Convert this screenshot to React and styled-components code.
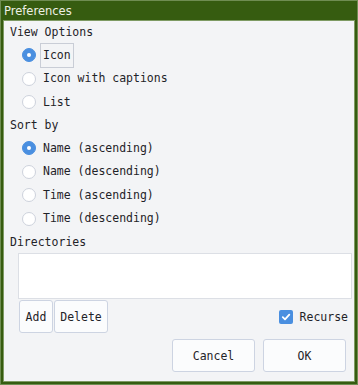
import React from 'react'
import styled, { createGlobalStyle } from 'styled-components'

const viewOptions = ['Icon', 'Icon with captions', 'List']
const sortOptions = ['Name (ascending)', 'Name (descending)', 'Time (ascending)', 'Time (descending)']

const App = () => {
  return (
    <>
      <Global />
      <Window>
        <TitleBar>Preferences</TitleBar>
        <Content>
          <SectionLabel>View Options</SectionLabel>
          {viewOptions.map((o, i) => (
            <OptionRow key={o}>
              <Radio checked={i === 0} />
              <OptionText focused={i === 0}>{o}</OptionText>
            </OptionRow>
          ))}
          <SectionLabel>Sort by</SectionLabel>
          {sortOptions.map((o, i) => (
            <OptionRow key={o}>
              <Radio checked={i === 0} />
              <OptionText>{o}</OptionText>
            </OptionRow>
          ))}
          <SectionLabel>Directories</SectionLabel>
          <ListBox />
          <ListActions>
            <Button width={34}>Add</Button>
            <Button width={54}>Delete</Button>
            <Spacer />
            <CheckLabel>
              <CheckBox>
                <svg width="10" height="10" viewBox="0 0 10 10">
                  <path d="M1.8 5.2 L4 7.3 L8.3 2.6" fill="none" stroke="#fff" strokeWidth="1.8" strokeLinecap="round" strokeLinejoin="round" />
                </svg>
              </CheckBox>
              Recurse
            </CheckLabel>
          </ListActions>
          <Footer>
            <Button width={83}>Cancel</Button>
            <Button width={83}>OK</Button>
          </Footer>
        </Content>
      </Window>
    </>
  )
}

export default App

const Global = createGlobalStyle`
body{
  margin:0;
  background:#fff;
}
`

const Window = styled.div`
width:358px;
height:385px;
box-sizing:border-box;
background:#365c10;
border:1px solid #6f8d52;
display:flex;
flex-direction:column;
`

const TitleBar = styled.div`
height:19px;
padding-left:3px;
display:flex;
align-items:center;
font-family:"DejaVu Sans", sans-serif;
font-size:11.5px;
color:#eef0e4;
`

const Content = styled.div`
flex:1;
margin:0 2px 2px 2px;
border:1px solid #7e9a63;
background:#f3f4f6;
display:flex;
flex-direction:column;
font-family:"DejaVu Sans Mono", monospace;
font-size:11.5px;
color:#1f2328;
`

const SectionLabel = styled.div`
height:22.5px;
flex-shrink:0;
display:flex;
align-items:center;
padding-left:6px;
`

const OptionRow = styled.div`
height:23.5px;
flex-shrink:0;
display:flex;
align-items:center;
padding-left:18px;
`

const Radio = styled.span`
width:14px;
height:14px;
box-sizing:border-box;
border-radius:50%;
background:${p => (p.checked ? '#4a8fe0' : '#fff')};
border:1px solid ${p => (p.checked ? '#4a8fe0' : '#cdd2dc')};
display:flex;
align-items:center;
justify-content:center;
margin-right:4px;
&:after{
  content:"";
  width:4px;
  height:4px;
  border-radius:50%;
  background:#fff;
  display:${p => (p.checked ? 'block' : 'none')};
}
`

const OptionText = styled.span`
padding:4px 2px;
line-height:15px;
border:1px solid ${p => (p.focused ? '#c9cdd6' : 'transparent')};
`

const ListBox = styled.div`
height:44px;
flex-shrink:0;
margin:0 2px 0 14px;
background:#fff;
border:1px solid #dcdfe5;
`

const ListActions = styled.div`
display:flex;
align-items:center;
gap:1px;
padding:1px 6px 0 15px;
`

const Spacer = styled.div`
flex:1;
`

const Button = styled.div`
width:${p => p.width}px;
height:33px;
box-sizing:border-box;
display:flex;
align-items:center;
justify-content:center;
background:#fbfcfd;
border:1px solid #cdd4e2;
border-radius:3px;
`

const CheckLabel = styled.div`
display:flex;
align-items:center;
gap:7px;
`

const CheckBox = styled.span`
width:14px;
height:14px;
border-radius:2px;
background:#4a8fe0;
display:flex;
align-items:center;
justify-content:center;
`

const Footer = styled.div`
display:flex;
justify-content:flex-end;
gap:8px;
padding:6px 8px 0 0;
`
